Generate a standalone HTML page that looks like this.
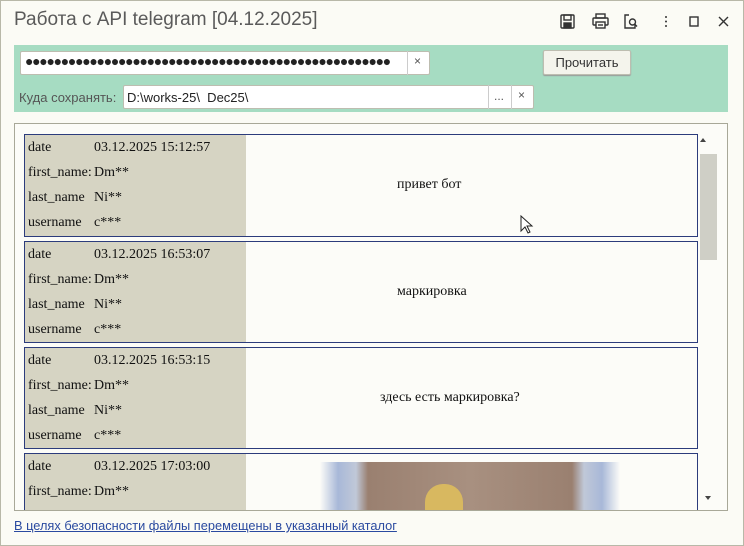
<!DOCTYPE html>
<html><head><meta charset="utf-8"><style>
*{margin:0;padding:0;box-sizing:border-box}
body{width:744px;height:546px;background:#fbfbf5;position:relative;overflow:hidden;font-family:"Liberation Sans",sans-serif;border:1px solid #b8b8a8}
.abs{position:absolute}
.title{left:13px;top:8px;font-size:19px;color:#5a5a5a}
.panel{left:13px;top:44px;width:714px;height:67px;background:#a6dcc2}
.inp{background:#fff;border:1px solid #bdbdb0;border-radius:2px}
.btn{font-size:13px;color:#333;text-align:center}
.list{left:13px;top:122px;width:714px;height:388px;border:1px solid #a8a898;background:#fcfcf8;overflow:hidden}
.blk{position:absolute;left:9px;width:674px;border:1px solid #2c3c7c;background:#fcfcf8;font-family:"Liberation Serif",serif;font-size:14px;color:#111}
.lc{position:absolute;left:0;top:0;bottom:0;width:221px;background:#d6d4c3}
.r{position:absolute;left:3px}
.v{position:absolute;left:69px}
.msg{position:absolute}
.link{left:13px;top:517px;font-size:12.8px;color:#2a4aa0;text-decoration:underline}
</style></head><body>
<div class="abs title">Работа с API telegram [04.12.2025]</div>
<svg class="abs" style="left:558px;top:10px" width="180" height="22" viewBox="0 0 180 22" fill="none" stroke="#333" stroke-width="1.4">
<rect x="2" y="4" width="13" height="13" rx="1"/><rect x="5" y="4" width="7" height="5"/><rect x="5" y="12" width="7" height="5" fill="#333"/>
<rect x="37" y="3" width="9" height="4"/><rect x="34" y="7" width="15" height="7" rx="1"/><rect x="37" y="11" width="9" height="6" fill="#fbfbf5"/><line x1="39" y1="14" x2="44" y2="14"/>
<path d="M70 4h-4v13h10v-4"/><circle cx="73.5" cy="11" r="3"/><line x1="75.5" y1="13" x2="78" y2="15.5"/>
<circle cx="107" cy="6" r="1" fill="#333" stroke="none"/><circle cx="107" cy="10.5" r="1" fill="#333" stroke="none"/><circle cx="107" cy="15" r="1" fill="#333" stroke="none"/>
<rect x="131" y="6" width="8" height="9"/>
<path d="M160 6l9 9M169 6l-9 9"/>
</svg>
<div class="abs panel"></div>
<div class="abs inp" style="left:19px;top:50px;width:410px;height:24px"></div>
<div class="abs" style="left:24px;top:52px;font-size:14px;letter-spacing:-1.3px;color:#222">●●●●●●●●●●●●●●●●●●●●●●●●●●●●●●●●●●●●●●●●●●●●●●●●●●●</div>
<div class="abs" style="left:406px;top:50px;width:1px;height:24px;background:#ccc"></div>
<div class="abs" style="left:413px;top:53px;font-size:12px;color:#555">×</div>
<div class="abs inp btn" style="left:542px;top:49px;width:88px;height:25px;line-height:24px;background:#f4f4ec;box-shadow:0 1px 1px #999">Прочитать</div>
<div class="abs" style="left:18px;top:89px;font-size:13px;color:#555">Куда сохранять:</div>
<div class="abs inp" style="left:122px;top:84px;width:411px;height:24px"></div>
<div class="abs" style="left:126px;top:89px;font-size:13px;color:#222">D:\works-25\&nbsp; Dec25\</div>
<div class="abs" style="left:487px;top:84px;width:1px;height:24px;background:#ccc"></div>
<div class="abs" style="left:510px;top:84px;width:1px;height:24px;background:#ccc"></div>
<div class="abs" style="left:493px;top:88px;font-size:12px;color:#555">...</div>
<div class="abs" style="left:517px;top:87px;font-size:12px;color:#555">×</div>
<div class="abs list">
 <div class="blk" style="top:10px;height:103px"><div class="lc"></div>
  <div class="r" style="top:5px">date</div><div class="v" style="top:5px">03.12.2025 15:12:57</div>
  <div class="r" style="top:30px">first_name:</div><div class="v" style="top:30px">Dm**</div>
  <div class="r" style="top:55px">last_name</div><div class="v" style="top:55px">Ni**</div>
  <div class="r" style="top:80px">username</div><div class="v" style="top:80px">c***</div>
  <div class="msg" style="top:42px;left:372px">привет бот</div></div>
 <div class="blk" style="top:117px;height:102px"><div class="lc"></div>
  <div class="r" style="top:5px">date</div><div class="v" style="top:5px">03.12.2025 16:53:07</div>
  <div class="r" style="top:30px">first_name:</div><div class="v" style="top:30px">Dm**</div>
  <div class="r" style="top:55px">last_name</div><div class="v" style="top:55px">Ni**</div>
  <div class="r" style="top:80px">username</div><div class="v" style="top:80px">c***</div>
  <div class="msg" style="top:42px;left:372px">маркировка</div></div>
 <div class="blk" style="top:223px;height:102px"><div class="lc"></div>
  <div class="r" style="top:5px">date</div><div class="v" style="top:5px">03.12.2025 16:53:15</div>
  <div class="r" style="top:30px">first_name:</div><div class="v" style="top:30px">Dm**</div>
  <div class="r" style="top:55px">last_name</div><div class="v" style="top:55px">Ni**</div>
  <div class="r" style="top:80px">username</div><div class="v" style="top:80px">c***</div>
  <div class="msg" style="top:42px;left:355px">здесь есть маркировка?</div></div>
 <div class="blk" style="top:329px;height:80px"><div class="lc"></div>
  <div class="r" style="top:5px">date</div><div class="v" style="top:5px">03.12.2025 17:03:00</div>
  <div class="r" style="top:30px">first_name:</div><div class="v" style="top:30px">Dm**</div>
  <div style="position:absolute;left:295px;top:8px;width:300px;height:60px;background:linear-gradient(90deg,#fcfcf8 0,#a8b8d8 6%,#c0c8d8 12%,#9a8070 16%,#a89080 50%,#9a8070 84%,#c0c8d8 88%,#a8b8d8 94%,#fcfcf8 100%)"></div>
  <div style="position:absolute;left:400px;top:30px;width:38px;height:40px;border-radius:18px 18px 0 0;background:#d8b860"></div>
 </div>
 <div style="position:absolute;left:685px;top:14px;width:0;height:0;border-left:3px solid transparent;border-right:3px solid transparent;border-bottom:4px solid #444"></div>
 <div style="position:absolute;left:685px;top:30px;width:17px;height:106px;background:#cfcfc6"></div>
 <div style="position:absolute;left:690px;top:372px;width:0;height:0;border-left:3px solid transparent;border-right:3px solid transparent;border-top:4px solid #444"></div>
</div>
<svg class="abs" style="left:519px;top:214px" width="14" height="20" viewBox="0 0 14 20"><path d="M1 1v15l4-4 3 6 2-1-3-6h5z" fill="#fff" stroke="#222" stroke-width="1"/></svg>
<div class="abs link">В целях безопасности файлы перемещены в указанный каталог</div>
</body></html>
